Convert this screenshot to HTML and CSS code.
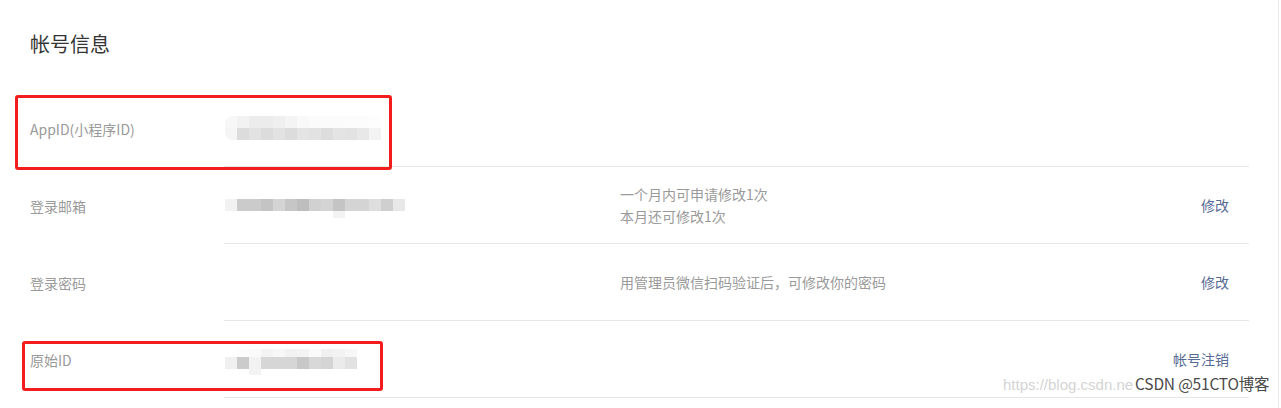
FILE: index.html
```html
<!DOCTYPE html>
<html lang="zh-CN">
<head>
<meta charset="utf-8">
<title>帐号信息</title>
<link rel="stylesheet" href="styles.css">
</head>
<body>
<div class="page">
  <h2 class="title">帐号信息</h2>
  <div class="list">
    <div class="row">
      <div class="label">AppID(小程序ID)</div>
      <div class="main">
        <div class="value">
          <div class="mosaic">
            <div class="line">
              <span class="blk first" style="background:#f7f7f7"></span><span class="blk" style="background:#f2f2f2"></span><span class="blk" style="background:#ececec"></span><span class="blk" style="background:#ececec"></span><span class="blk" style="background:#efefef"></span><span class="blk" style="background:#f4f4f4"></span><span class="blk" style="background:#f9f9f9"></span><span class="blk" style="background:#fbfbfb"></span><span class="blk" style="background:#fbfbfb"></span><span class="blk" style="background:#fbfbfb"></span><span class="blk" style="background:#fcfcfc"></span><span class="blk" style="background:#fcfcfc"></span><span class="blk" style="background:#fdfdfd"></span>
            </div>
            <div class="line">
              <span class="blk firstb" style="background:#f5f5f5"></span><span class="blk" style="background:#dcdcdc"></span><span class="blk" style="background:#e2e2e2"></span><span class="blk" style="background:#dcdcdc"></span><span class="blk" style="background:#e2e2e2"></span><span class="blk" style="background:#dcdcdc"></span><span class="blk" style="background:#e4e4e4"></span><span class="blk" style="background:#e2e2e2"></span><span class="blk" style="background:#dddddd"></span><span class="blk" style="background:#e4e4e4"></span><span class="blk" style="background:#e2e2e2"></span><span class="blk" style="background:#e8e8e8"></span><span class="blk" style="background:#f3f3f3"></span>
            </div>
          </div>
        </div>
        <div class="desc"></div>
        <div class="action"></div>
      </div>
    </div>
    <div class="row">
      <div class="label">登录邮箱</div>
      <div class="main">
        <div class="value">
          <div class="mosaic">
            <div class="line">
              <span class="blk" style="background:#f2f2f2"></span><span class="blk" style="background:#cbcbcb"></span><span class="blk" style="background:#cbcbcb"></span><span class="blk" style="background:#c4c4c4"></span><span class="blk" style="background:#d4d4d4"></span><span class="blk" style="background:#c6c6c6"></span><span class="blk" style="background:#bebebe"></span><span class="blk" style="background:#d1d1d1"></span><span class="blk" style="background:#d4d4d4"></span><span class="blk" style="background:#c4c4c4"></span><span class="blk" style="background:#d4d4d4"></span><span class="blk" style="background:#d4d4d4"></span><span class="blk" style="background:#dedede"></span><span class="blk" style="background:#cfcfcf"></span><span class="blk" style="background:#e8e8e8"></span>
            </div>
            <div class="tail tail-9"><span class="blk short" style="background:#f3f3f3"></span></div>
          </div>
        </div>
        <div class="desc">一个月内可申请修改1次<br>本月还可修改1次</div>
        <a class="action">修改</a>
      </div>
    </div>
    <div class="row">
      <div class="label">登录密码</div>
      <div class="main">
        <div class="value"></div>
        <div class="desc">用管理员微信扫码验证后，可修改你的密码</div>
        <a class="action">修改</a>
      </div>
    </div>
    <div class="row">
      <div class="label">原始ID</div>
      <div class="main">
        <div class="value">
          <div class="mosaic">
            <div class="line">
              <span class="blk short" style="background:#ffffff"></span><span class="blk short" style="background:#fcfcfc"></span><span class="blk short" style="background:#fafafa"></span><span class="blk short" style="background:#f3f3f3"></span><span class="blk short" style="background:#f7f7f7"></span><span class="blk short" style="background:#f2f2f2"></span><span class="blk short" style="background:#f4f4f4"></span><span class="blk short" style="background:#fafafa"></span><span class="blk short" style="background:#f0f0f0"></span><span class="blk short" style="background:#f3f3f3"></span><span class="blk short" style="background:#f7f7f7"></span>
            </div>
            <div class="line">
              <span class="blk" style="background:#f0f0f0"></span><span class="blk" style="background:#cbcbcb"></span><span class="blk" style="background:#f2f2f2"></span><span class="blk" style="background:#d6d6d6"></span><span class="blk" style="background:#d6d6d6"></span><span class="blk" style="background:#d6d6d6"></span><span class="blk" style="background:#c8c8c8"></span><span class="blk" style="background:#d8d8d8"></span><span class="blk" style="background:#d4d4d4"></span><span class="blk" style="background:#ebebeb"></span><span class="blk" style="background:#e2e2e2"></span>
            </div>
            <div class="tail tail-2"><span class="blk tiny" style="background:#f3f3f3"></span></div>
          </div>
        </div>
        <div class="desc"></div>
        <a class="action">帐号注销</a>
      </div>
    </div>
  </div>

  <div class="mark mark-1"></div>
  <div class="mark mark-2"></div>

  <div class="watermark">
    <span class="wm-url">https://blog.csdn.ne</span><span class="wm-name">CSDN @51CTO博客</span>
  </div>
</div>
</body>
</html>
```

FILE: styles.css
```css
* { box-sizing: border-box; }

html, body {
  margin: 0;
  padding: 0;
  background: #ffffff;
}

body {
  font-family: "Noto Sans CJK SC", "Noto Sans", "Liberation Sans", sans-serif;
  font-size: 14px;
  color: #353535;
}

.page {
  position: relative;
  width: 1279px;
  height: 408px;
  border-right: 1px solid #e9e9e9;
  overflow: hidden;
}

.title {
  margin: 0;
  padding: 30px 30px 0 30px;
  height: 90px;
  font-size: 20px;
  font-weight: 400;
  line-height: 28px;
  color: #353535;
}

.list {
  display: flex;
  flex-direction: column;
}

.row {
  display: flex;
  padding-left: 30px;
  padding-right: 29px;
}

.label {
  width: 194px;
  display: flex;
  align-items: center;
  color: #9a9a9a;
  line-height: 22px;
}

.main {
  flex: 1;
  height: 77px;
  display: flex;
  align-items: center;
  border-bottom: 1px solid #e7e7e7;
  padding-right: 20px;
}

.value {
  width: 396px;
  display: flex;
  align-items: center;
}

.desc {
  flex: 1;
  color: #9a9a9a;
  line-height: 22px;
}

.action {
  color: #576b95;
  line-height: 22px;
  text-decoration: none;
  cursor: pointer;
}

.mosaic {
  display: flex;
  flex-direction: column;
  padding-left: 1px;
}

.line {
  display: flex;
}

.blk {
  display: block;
  width: 12px;
  height: 12px;
}

.blk.short { height: 8px; }
.blk.tiny { height: 6px; }

.blk.first { border-top-left-radius: 8px; }
.blk.firstb { border-bottom-left-radius: 8px; }

.tail { display: flex; }
.tail-9 { padding-left: 108px; margin-bottom: -7px; }
.tail-9 .blk { height: 7px; }
.tail-2 { padding-left: 24px; margin-bottom: -6px; }

.mark {
  position: absolute;
  border: 3px solid #f41d1d;
  border-radius: 3px;
}

.mark-1 {
  left: 15px;
  top: 95px;
  width: 377px;
  height: 75px;
}

.mark-2 {
  left: 22px;
  top: 341px;
  width: 361px;
  height: 50px;
}

.watermark {
  position: absolute;
  left: 1003px;
  top: 372px;
  display: flex;
  align-items: baseline;
  white-space: nowrap;
  line-height: 22px;
}

.wm-url {
  color: #d4d4d4;
  font-family: "Liberation Sans", sans-serif;
  font-size: 15px;
  margin-right: 2px;
}

.wm-name {
  color: #4a4a4a;
  text-shadow: 0 0 1px #ffffff;
  font-family: "Noto Sans CJK SC", "Liberation Sans", sans-serif;
  font-size: 15.5px;
  letter-spacing: -0.2px;
}
```
